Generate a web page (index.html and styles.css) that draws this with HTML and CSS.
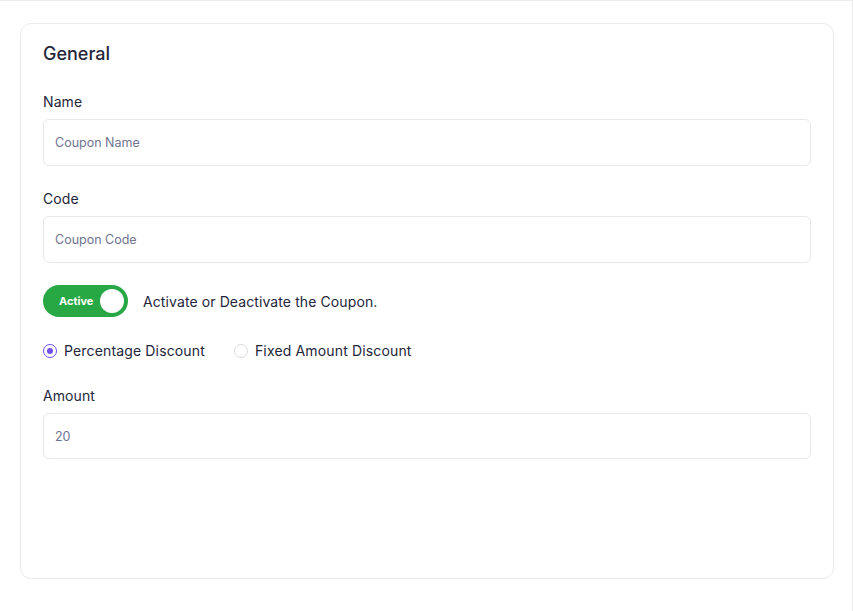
FILE: index.html
```html
<!DOCTYPE html>
<html lang="en">
<head>
  <meta charset="UTF-8">
  <title>Coupon - General</title>
  <link rel="stylesheet" href="styles.css">
</head>
<body>
  <div class="page">
    <div class="card">
      <h3 class="card-title">General</h3>

      <div class="form-group">
        <label for="name">Name</label>
        <input type="text" id="name" placeholder="Coupon Name">
      </div>

      <div class="form-group">
        <label for="code">Code</label>
        <input type="text" id="code" placeholder="Coupon Code">
      </div>

      <div class="toggle-row">
        <label class="toggle">
          <span class="toggle-text">Active</span>
          <span class="toggle-knob"></span>
        </label>
        <span class="toggle-desc">Activate or Deactivate the Coupon.</span>
      </div>

      <div class="radio-row">
        <label class="radio">
          <span class="radio-dot checked"></span>
          Percentage Discount
        </label>
        <label class="radio">
          <span class="radio-dot"></span>
          Fixed Amount Discount
        </label>
      </div>

      <div class="form-group">
        <label for="amount">Amount</label>
        <input type="text" id="amount" class="short" value="20">
      </div>
    </div>
  </div>
</body>
</html>
```

FILE: styles.css
```css
body {
  margin: 0;
  font-family: Inter, "Noto Sans", sans-serif;
  color: #24263a;
  background: #fff;
}
.page {
  width: 853px;
  height: 611px;
  box-sizing: border-box;
  border-top: 1px solid #ececec;
  border-right: 1px solid #ececec;
  padding: 22px 18px 0 20px;
}
.card {
  height: 556px;
  box-sizing: border-box;
  border: 1px solid #ebebeb;
  border-radius: 11px;
  padding: 19px 22px 18px;
}
.card-title {
  margin: 0 0 27px;
  font-size: 18px;
  line-height: 22px;
  font-weight: 500;
}
.form-group {
  display: flex;
  flex-direction: column;
  margin-bottom: 23px;
}
.form-group label {
  font-size: 14px;
  line-height: 20px;
  letter-spacing: 0.1px;
  margin-bottom: 7px;
}
.form-group input {
  height: 47px;
  box-sizing: border-box;
  border: 1px solid #e8e8e8;
  border-radius: 6px;
  padding: 0 11px;
  font-family: inherit;
  font-size: 12.5px;
  color: #6f7393;
  outline: none;
}
.form-group input.short {
  height: 46px;
}
.form-group input::placeholder {
  color: #70748f;
}
.toggle-row {
  display: flex;
  align-items: center;
  gap: 15px;
  margin-top: -1px;
}
.toggle {
  width: 85px;
  height: 32px;
  box-sizing: border-box;
  border-radius: 16px;
  background: #28a745;
  display: flex;
  align-items: center;
  justify-content: space-between;
  padding: 0 4px 0 16px;
}
.toggle-text {
  color: #fff;
  font-size: 11px;
  font-weight: 700;
}
.toggle-knob {
  width: 24px;
  height: 24px;
  border-radius: 50%;
  background: #fff;
}
.toggle-desc {
  font-size: 14px;
  letter-spacing: 0.1px;
}
.radio-row {
  display: flex;
  gap: 29px;
  margin: 24px 0 25px;
  font-size: 14px;
  line-height: 20px;
  letter-spacing: 0.15px;
}
.radio {
  display: flex;
  align-items: center;
  gap: 7px;
}
.radio-dot {
  width: 14px;
  height: 14px;
  box-sizing: border-box;
  border: 1px solid #dcdcdc;
  border-radius: 50%;
  display: flex;
  align-items: center;
  justify-content: center;
}
.radio-dot.checked {
  border: 1.5px solid #6f4ff2;
}
.radio-dot.checked::after {
  content: "";
  width: 6px;
  height: 6px;
  border-radius: 50%;
  background: #6f4ff2;
}
```
